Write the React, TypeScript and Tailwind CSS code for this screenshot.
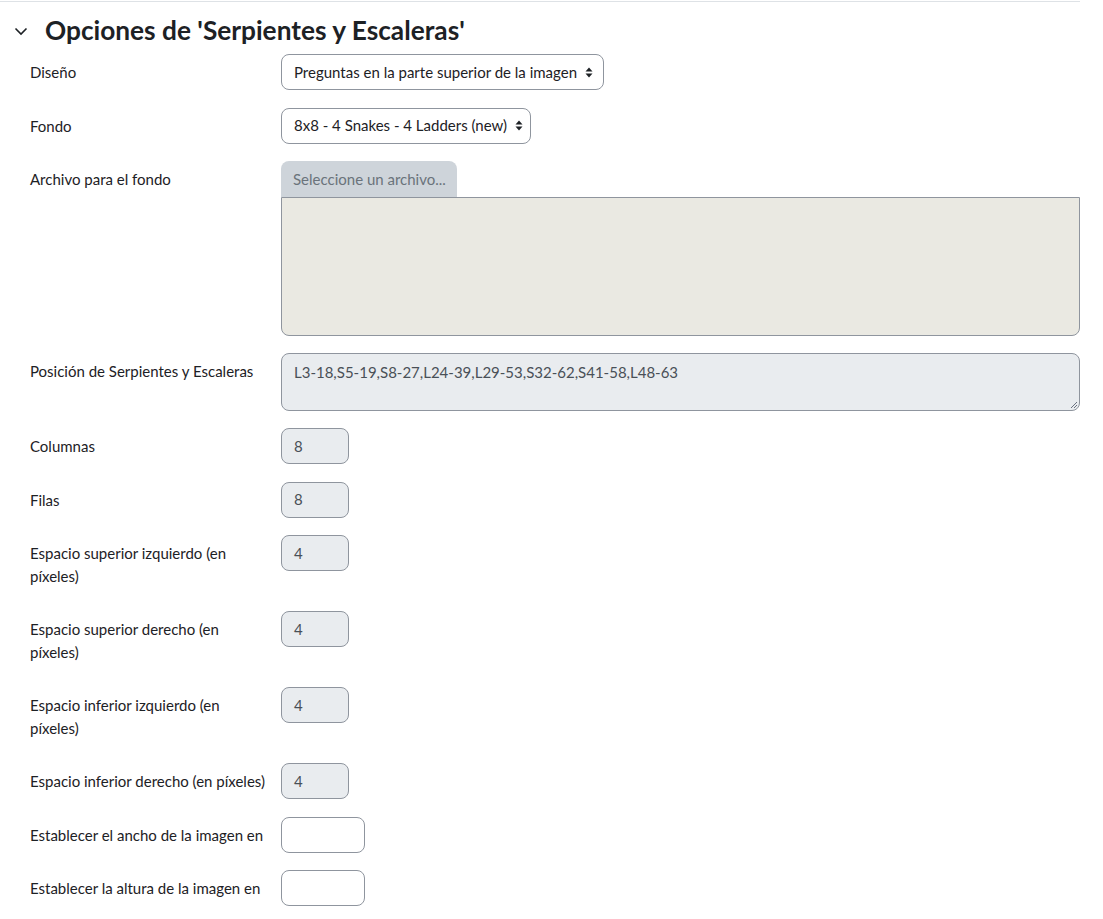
import type { ReactNode } from 'react'

const font = { fontFamily: 'Lato, "Open Sans", sans-serif' }

function Row({ label, children }: { label: string; children: ReactNode }) {
  return (
    <div className="flex mb-[17px]">
      <div className="w-[281px] shrink-0 pl-[30px] pr-[14px] pt-[7px] pb-[7px] text-[15px] leading-[22.5px] text-[#1d2125]">
        {label}
      </div>
      <div className="flex-1 pr-[23px]">{children}</div>
    </div>
  )
}

function SelectBox({ value, width }: { value: string; width: string }) {
  return (
    <div
      className={`${width} h-[36px] flex items-center justify-between whitespace-nowrap rounded-lg border border-[#8f959e] bg-white pl-[12px] pr-[11px] text-[15px] text-[#1d2125]`}
    >
      <span>{value}</span>
      <svg width="8" height="11" viewBox="0 0 8 11" className="ml-2 shrink-0">
        <path d="M4 0.5 L7.5 4.5 H0.5 Z" fill="#1d2125" />
        <path d="M4 10.5 L7.5 6.5 H0.5 Z" fill="#1d2125" />
      </svg>
    </div>
  )
}

function NumInput({ value, disabled = true }: { value: string; disabled?: boolean }) {
  return (
    <div
      className={
        disabled
          ? 'w-[68px] h-[36px] flex items-center rounded-lg border border-[#8f959e] bg-[#e9ecef] px-[12px] text-[15px] text-[#495057]'
          : 'w-[84px] h-[36px] flex items-center rounded-lg border border-[#8f959e] bg-white px-[12px] text-[15px] text-[#1d2125]'
      }
    >
      {value}
    </div>
  )
}

export default function App() {
  return (
    <div className="min-h-[919px] w-[1103px] bg-white" style={font}>
      <div className="border-t border-[#dee2e6] mt-[1px] mr-[23px]" />
      {/* Header */}
      <div className="flex items-center h-[52px] pt-[4px]">
        <svg width="14" height="9" viewBox="0 0 14 9" className="ml-[14px] mr-[17px] mt-[3px]">
          <path d="M1.5 1.5 L7 7 L12.5 1.5" fill="none" stroke="#1d2125" strokeWidth="1.6" />
        </svg>
        <h3 className="text-[26.25px] font-bold text-[#1d2125] leading-none">Opciones de 'Serpientes y Escaleras'</h3>
      </div>

      <Row label="Diseño">
        <SelectBox value="Preguntas en la parte superior de la imagen" width="w-[323px]" />
      </Row>
      <Row label="Fondo">
        <SelectBox value="8x8 - 4 Snakes - 4 Ladders (new)" width="w-[250px]" />
      </Row>
      <Row label="Archivo para el fondo">
        <div className="flex flex-col">
          <div className="w-[176px] h-[36px] flex items-center whitespace-nowrap rounded-t-lg bg-[#ced4da] px-[12px] text-[15px] text-[#6a737b]">
            Seleccione un archivo...
          </div>
          <div className="h-[139px] rounded-b-lg border border-[#8f959e] bg-[#eae9e2]" />
        </div>
      </Row>
      <Row label="Posición de Serpientes y Escaleras">
        <div className="relative h-[58px] rounded-lg border border-[#8f959e] bg-[#e9ecef] px-[12px] pt-[7px] text-[15px] leading-[22.5px] text-[#495057]">
          L3-18,S5-19,S8-27,L24-39,L29-53,S32-62,S41-58,L48-63
          <svg width="9" height="9" viewBox="0 0 9 9" className="absolute right-[1px] bottom-[1px]">
            <path d="M8 2 L2 8 M8 5 L5 8" stroke="#6b7280" strokeWidth="1" />
          </svg>
        </div>
      </Row>
      <Row label="Columnas">
        <NumInput value="8" />
      </Row>
      <Row label="Filas">
        <NumInput value="8" />
      </Row>
      <Row label="Espacio superior izquierdo (en píxeles)">
        <NumInput value="4" />
      </Row>
      <Row label="Espacio superior derecho (en píxeles)">
        <NumInput value="4" />
      </Row>
      <Row label="Espacio inferior izquierdo (en píxeles)">
        <NumInput value="4" />
      </Row>
      <Row label="Espacio inferior derecho (en píxeles)">
        <NumInput value="4" />
      </Row>
      <Row label="Establecer el ancho de la imagen en">
        <NumInput value="" disabled={false} />
      </Row>
      <Row label="Establecer la altura de la imagen en">
        <NumInput value="" disabled={false} />
      </Row>
    </div>
  )
}
